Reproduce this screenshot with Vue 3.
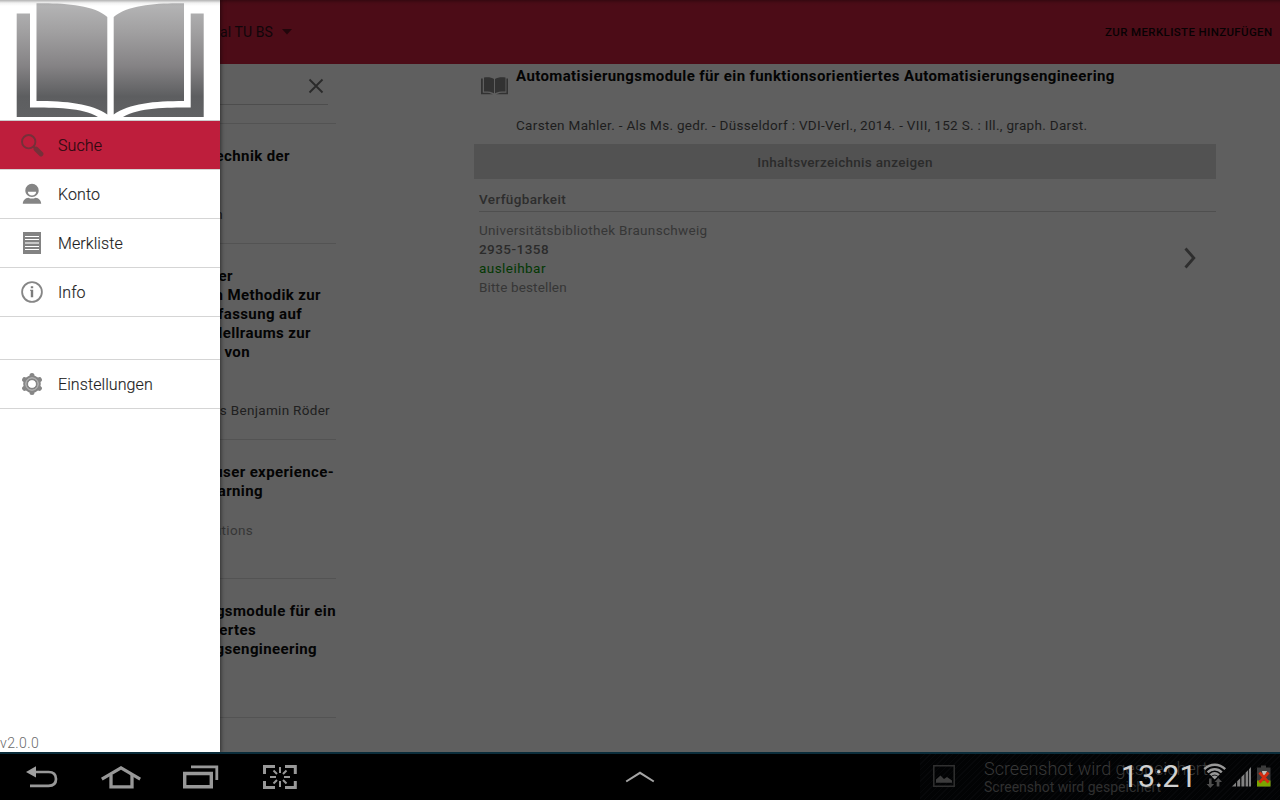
<script setup>
const menu = [
  { id: 'search', label: 'Suche', active: true },
  { id: 'account', label: 'Konto' },
  { id: 'watchlist', label: 'Merkliste' },
  { id: 'info', label: 'Info' },
  { id: 'gap', label: '' },
  { id: 'gear', label: 'Einstellungen' },
]

// `end` is the x coordinate at which the line's text ends
const results = [
  { title: [{ t: 'Technik der', end: 290 }], meta: [{ t: '\u00a0', end: 300 }, { t: 'n', end: 223, dark: true }] },
  {
    title: [
      { t: 'der', end: 233 },
      { t: 'n Methodik zur', end: 321 },
      { t: 'Erfassung auf', end: 302 },
      { t: 'Modellraums zur', end: 311 },
      { t: 'von', end: 250 },
    ],
    meta: [{ t: '\u00a0', end: 300 }, { t: 's Benjamin Röder', end: 330, dark: true }],
  },
  {
    title: [{ t: 'user experience-', end: 334 }, { t: 'learning', end: 263 }],
    meta: [{ t: 'Solutions', end: 253 }, { t: '\u00a0', end: 300 }],
  },
  {
    title: [
      { t: 'Automatisierungsmodule für ein', end: 336 },
      { t: 'funktionsorientiertes', end: 256 },
      { t: 'Automatisierungsengineering', end: 317 },
    ],
    meta: [{ t: '\u00a0', end: 300 }],
  },
]
const pad = (l) => ({ paddingRight: 336 - l.end + 'px' })
</script>

<template>
  <div class="screen">
    <div class="app">
      <header class="bar">
        <div class="site"><span class="site-name">al TU BS</span>
          <svg width="10" height="6" viewBox="0 0 10 6"><path d="M0 0H10L5 5.5Z" fill="#21060b" /></svg>
        </div>
        <span class="add">ZUR MERKLISTE HINZUFÜGEN</span>
      </header>
      <main class="panes">
        <section class="list">
          <div class="query">
            <svg width="16" height="16" viewBox="0 0 16 16"><path d="M1.5 1.5L14.5 14.5M14.5 1.5L1.5 14.5" stroke="#2a2a2a" stroke-width="1.8" /></svg>
          </div>
          <article v-for="(r, i) in results" :key="i" class="result">
            <div v-for="(l, j) in r.title" :key="'t' + j" class="line title" :style="pad(l)">{{ l.t }}</div>
            <div class="spacer"></div>
            <div v-for="(l, j) in r.meta" :key="'m' + j" class="line meta" :class="{ dark: l.dark }" :style="pad(l)">{{ l.t }}</div>
          </article>
          <div class="result last"></div>
        </section>

        <section class="detail">
          <div class="head">
            <svg class="book" width="27" height="18" viewBox="0 0 27 18" fill="#323232">
              <path d="M3 0.6C7 0 10.500 0.400 13 2V16.300C10.500 14.800 7 14.500 3 14.600ZM24.500 0.600C20.500 0 16.500 0.400 14 2V16.300C16.500 14.800 20.500 14.500 24.500 14.600Z" />
              <path d="M0 1.500H1.800V15.700C6 15.500 9.500 15.800 12 17.300H0ZM27 1.500H25.400V15.700C21 15.500 17.500 15.800 15 17.300H27Z" />
            </svg>
            <div>
              <h1>Automatisierungsmodule für ein funktionsorientiertes Automatisierungsengineering</h1>
              <p class="desc">Carsten Mahler. - Als Ms. gedr. - Düsseldorf : VDI-Verl., 2014. - VIII, 152 S. : Ill., graph. Darst.</p>
            </div>
          </div>
          <div class="toc"><span>Inhaltsverzeichnis anzeigen</span></div>
          <h2><span>Verfügbarkeit</span></h2>
          <div class="holding">
            <div class="rows">
              <div><span class="lib">Universitätsbibliothek Braunschweig</span></div>
              <div class="sig"><span>2935-1358</span></div>
              <div class="ok"><span>ausleihbar</span></div>
              <div><span class="order">Bitte bestellen</span></div>
            </div>
            <svg width="12" height="22" viewBox="0 0 12 22"><path d="M1.500 1.500L9.800 11L1.500 20.500" fill="none" stroke="#2e2e2e" stroke-width="2.800" /></svg>
          </div>
        </section>
      </main>

      <aside class="drawer">
        <div class="logo">
          <svg width="188" height="120" viewBox="0 0 188 120">
            <defs>
              <linearGradient id="metal" gradientUnits="userSpaceOnUse" x1="0" y1="3" x2="0" y2="117">
                <stop offset="0" stop-color="#b5b5b6" /><stop offset=".25" stop-color="#a1a0a1" />
                <stop offset=".55" stop-color="#858385" /><stop offset=".82" stop-color="#5d5e60" /><stop offset="1" stop-color="#606163" />
              </linearGradient>
            </defs>
            <g fill="url(#metal)">
              <path d="M20.500 3.300C45 2.800 78 4.500 91.300 17V114.500C76 103.500 50 101 20.500 101Z" />
              <path d="M168 3.300C143 2.800 112 4.500 97.700 17V114.500C113 103.500 138 101 168 101Z" />
              <path d="M0.700 13.500H14V107.500C39 107.500 66 107.500 82 117H0.700Z" />
              <path d="M187.700 13.500H174.700V107.500C149 107.500 124 107.500 107 117H187.700Z" />
            </g>
          </svg>
        </div>
        <nav>
          <div v-for="m in menu" :key="m.id" class="item" :class="[m.id, { active: m.active }]">
            <svg v-if="m.id === 'search'" width="24" height="24" viewBox="0 0 24 24">
              <circle cx="8.700" cy="8.700" r="6.700" fill="none" stroke="#753039" stroke-width="1.900" />
              <path d="M13.500 13.500L16 16" stroke="#753039" stroke-width="2" />
              <path d="M16 16L21 21" stroke="#753039" stroke-width="4.800" stroke-linecap="round" />
            </svg>
            <svg v-else-if="m.id === 'account'" width="24" height="24" viewBox="0 0 24 24" fill="#858585">
              <path d="M12 1.800A6.700 6.700 0 0 1 18.700 8.500C18.700 12 16 15 12 15S5.300 12 5.300 8.500A6.700 6.700 0 0 1 12 1.800ZM7.800 9.700C8.200 12.400 9.700 13.400 12 13.400S15.800 12.400 16.200 9.700Z" fill-rule="evenodd" />
              <path d="M2.800 21.800C3 18.400 5 16 8.500 15.700C10.500 16.900 13.500 16.900 15.500 15.700C19 16 21 18.400 21.200 21.800Z" />
            </svg>
            <svg v-else-if="m.id === 'watchlist'" width="24" height="24" viewBox="0 0 24 24">
              <path d="M3 1H21V23H3Z" fill="#828282" />
              <path d="M5 5.500H19M5 8.500H19M5 15.500H19M5 18.500H19" stroke="#fff" stroke-width="1" />
              <path d="M5 12H19" stroke="#c8c8c8" stroke-width="2" />
            </svg>
            <svg v-else-if="m.id === 'info'" width="24" height="24" viewBox="0 0 24 24">
              <circle cx="12" cy="12" r="9.900" fill="none" stroke="#868686" stroke-width="1.800" />
              <path d="M10.800 6.300H13.200V8.300H10.800ZM10 9.700H13.200V17.300H10.800V10.700H10Z" fill="#7c7c7c" />
            </svg>
            <svg v-else-if="m.id === 'gear'" width="24" height="24" viewBox="0 0 24 24">
              <circle cx="12" cy="12" r="6.300" fill="none" stroke="#868686" stroke-width="5" />
              <g stroke="#868686" stroke-width="5" stroke-linecap="round">
                <path d="M12 3.500V5M12 19V20.500M4.600 7.700L6 8.500M18 15.500L19.400 16.300M4.600 16.300L6 15.500M18 8.500L19.400 7.700" />
              </g>
              <circle cx="12" cy="12" r="6.200" fill="none" stroke="#c8c8c8" stroke-width=".9" />
              <circle cx="12" cy="12" r="3.600" fill="#fff" />
            </svg>
            <span class="label">{{ m.label }}</span>
          </div>
        </nav>
        <span class="version">v2.0.0</span>
      </aside>
      <div class="top-shade"></div>
    </div>

    <footer class="system">
      <div class="keys">
        <svg width="32" height="22" viewBox="0 0 32 22"><path d="M4 19.800H22.500C27.500 19.800 30 17.500 30 13C30 8.500 27.500 6 22.500 6H8" fill="none" stroke="#989898" stroke-width="2.700" /><path d="M0 6L10 .3V11.500Z" fill="#a0a0a0" /></svg>
        <svg width="40" height="24" viewBox="0 0 40 24" fill="none" stroke="#989898"><path d="M.8 14.200L20 2.800L39.200 14.200" stroke-width="3.200" /><path d="M10 10V21.800H31V10" stroke-width="3.300" /></svg>
        <svg width="36" height="24" viewBox="0 0 36 24" fill="none" stroke="#989898"><path d="M1.700 8.500H28.300V21.700H1.700Z" stroke-width="3.400" /><path d="M8 1.800H33.800V15" stroke-width="2.800" /></svg>
        <svg width="34" height="24" viewBox="0 0 34 24" fill="none" stroke="#989898"><path d="M1.500 9V1.500H12M22 1.500H32.300V9M32.300 16V22.500H22M12 22.500H1.500V16" stroke-width="3" /><path d="M17 2V8M17 16V22M7 12H13M21 12H27M10.500 5.500L14 9M20 15L23.500 18.500M23.500 5.500L20 9M14 15L10.500 18.500" stroke-width="2" /></svg>
      </div>
      <svg class="up" width="30" height="12" viewBox="0 0 30 12"><path d="M1.200 10.500L15 1.800L28.800 10.500" fill="none" stroke="#a4a4a4" stroke-width="2" /></svg>
      <div class="tray">
        <svg class="pic" width="22" height="22" viewBox="0 0 22 22"><path d="M.8 .8H21.200V21.200H.8Z" fill="none" stroke="#303030" stroke-width="1.500" /><path d="M3 17.800V14.500L7.500 10.500L11 14L14 12L19 15.500V17.800Z" fill="#3c3c3c" /></svg>
        <div class="toast"><div><span class="toast-big">Screenshot wird gespeichert...</span></div><div><span class="toast-small">Screenshot wird gespeichert</span></div></div>
        <span class="clock">13:21</span>
        <svg class="status" width="70" height="26" viewBox="0 0 70 26">
          <g fill="none" stroke="#999" stroke-width="2.400"><path d="M1.300 6.200C7.300 .2 16.200 .2 22.200 6.200M4.600 9.300C8.700 5.200 14.700 5.200 18.800 9.300M7.500 12.200C10 9.900 13.300 9.900 15.900 12.200" /></g>
          <path d="M8.700 13.400Q11.700 11.700 14.700 13.400L11.700 16.500Z" fill="#999" />
          <path d="M6 15.500H8.600V21H11.200L7.300 25L3.500 21H6ZM13.700 23.500V19H11.700L15.400 15L19 19H16.400V23.500Z" fill="#4e4e4e" />
          <path d="M29 23.500L33 19.500V23.500ZM34.200 23.500V18.200L37.200 15.200V23.500ZM38.400 23.500V14L41.400 11V23.500ZM42.600 23.500V9.800L45.200 7V23.500ZM46 23.500V6.200L48 4V23.500Z" fill="#828282" />
          <path d="M58 2.500H63V4.500H67.500V23.500H54V4.500H58Z" fill="#3b3b3b" />
          <path d="M54 17.500H67.500V23.500H54Z" fill="#7aa500" />
          <path d="M59 8H64L62 13H60Z" fill="#c0c0b8" />
          <path d="M56.500 9.500L65.500 19.500M65.500 9.500L56.500 19.500" stroke="#d42c10" stroke-width="2.800" />
        </svg>
      </div>
    </footer>
  </div>
</template>

<style>
body { margin: 0; background: #000; }
</style>

<style scoped>
.screen { position: relative; width: 1280px; height: 800px; overflow: hidden; display: flex; flex-direction: column; background: #5f5f5f; font-family: Roboto, "Liberation Sans", sans-serif; white-space: nowrap; }
.app { position: relative; height: 752px; overflow: hidden; }
.bar { height: 64px; box-sizing: border-box; background: #4c0c17; display: flex; align-items: center; justify-content: space-between; padding: 0 7.5px 0 220px; color: #10060a; }
.site { display: flex; align-items: center; gap: 9px; font-size: 14px; }
.site-name { letter-spacing: .1px; }
.add { font-size: 11.5px; font-weight: 500; letter-spacing: .36px; color: #080204; }
.panes { display: flex; }
.list { width: 336px; margin-right: 138px; flex: none; }
.query { height: 41px; width: 328px; box-sizing: border-box; border-bottom: 1px solid #4d4d4d; padding: 14px 4px 0 0; display: flex; justify-content: flex-end; margin-bottom: 18px; }
.result { border-top: 1px solid #535353; padding: 22px 0 20px; overflow: hidden; }
.last { padding: 0; }
.spacer { height: 20px; }
.line { height: 19px; line-height: 21px; display: flex; justify-content: flex-end; }
.title { font-size: 15px; font-weight: 700; color: #040404; letter-spacing: .39px; }
.meta { font-size: 13.500px; color: #363636; letter-spacing: .31px; }
.dark { color: #202020; }
.detail { width: 742px; }
.head { height: 80px; display: flex; align-items: flex-start; gap: 8px; padding-left: 7px; box-sizing: border-box; }
.book { margin-top: 13px; }
h1 { margin: 3px 0 0; font-size: 15px; font-weight: 700; line-height: 19px; color: #040404; letter-spacing: .39px; }
.desc { margin: 30px 0 0; font-size: 13.500px; line-height: 19px; color: #1d1d1d; letter-spacing: .31px; }
.toc { height: 35px; line-height: 36px; background: #525252; color: #2b2b2b; text-align: center; font-size: 13.500px; letter-spacing: .3px; font-weight: 500; }
h2 { margin: 0 0 0 5px; height: 32px; border-bottom: 1px solid #4f4f4f; line-height: 41px; font-size: 13.500px; letter-spacing: .38px; font-weight: 500; color: #2d2d2d; }
.holding { display: flex; justify-content: space-between; align-items: center; padding: 9px 20px 0 5px; }
.rows { font-size: 13.500px; letter-spacing: .31px; line-height: 19px; color: #363636; }
.sig { font-weight: 500; color: #2b2b2b; letter-spacing: .45px; }
.ok { color: #033803; letter-spacing: .45px; }
.order { letter-spacing: .15px; }
.holding svg { margin-top: -2px; }

.drawer { position: absolute; left: 0; top: 0; width: 220px; height: 752px; background: #fff; box-shadow: 0 0 4px 1px rgba(0, 0, 0, .5); display: flex; flex-direction: column; }
.logo { height: 120px; border-bottom: 1px solid #ccc; padding-left: 16px; }
.logo svg { display: block; }
.item { height: 48px; border-bottom: 1px solid #d5d5d5; display: flex; align-items: center; padding-left: 20px; gap: 14px; font-size: 16px; color: #1e1e1e; }
.item.gap { height: 42px; }
.active { background: #be1e3c; color: #2a0a10; }
.label { font-weight: 300; -webkit-text-stroke: .15px; letter-spacing: .08px; }
.version { margin-top: auto; font-size: 14px; line-height: 18px; color: #6a6a6a; letter-spacing: .4px; font-weight: 300; }
.top-shade { position: absolute; inset: 0 0 auto; height: 6px; background: linear-gradient(rgba(0, 0, 0, .3), rgba(0, 0, 0, .05) 50%, transparent); }

.system { height: 48px; box-sizing: border-box; border-top: 2px solid #0b2d3b; background: #000; display: flex; align-items: center; position: relative; }
.keys { display: flex; align-items: center; padding-left: 26px; width: 600px; box-sizing: border-box; }
.keys svg { flex: none; margin-right: 43px; }
.keys svg:nth-child(2) { margin-right: 42px; }
.keys svg:nth-child(3) { margin-right: 44px; }
.up { margin-left: 25px; }
.tray { position: relative; margin-left: auto; width: 360px; height: 46px; background: repeating-linear-gradient(135deg, #020304 0 3px, #07080a 3px 4px); }
.pic { position: absolute; left: 13px; top: 11px; }
.toast { position: absolute; left: 64px; top: 5px; color: #383838; }
.toast-big { font-size: 18px; font-weight: 300; }
.toast-small { font-size: 14px; color: #303030; }
.toast div { height: 18px; line-height: 19px; }
.clock { position: absolute; left: 201px; top: 4px; font-size: 30.500px; line-height: 38px; color: #d0d0d0; font-weight: 400; letter-spacing: -.1px; }
.status { position: absolute; left: 283px; top: 9px; }
</style>
